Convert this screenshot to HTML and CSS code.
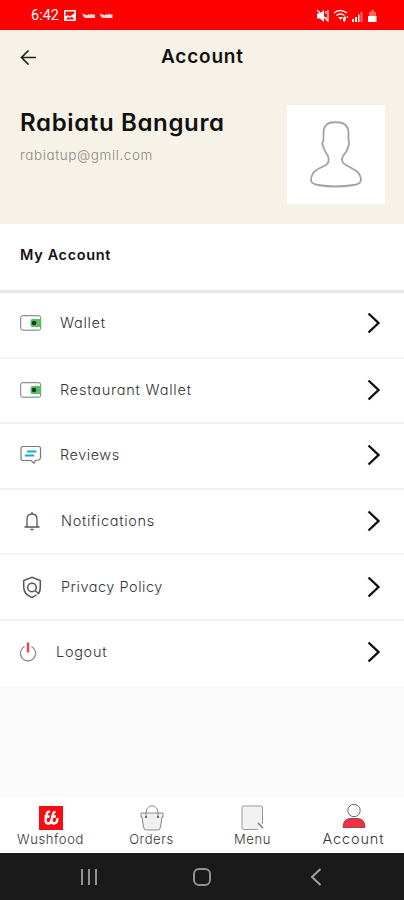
FILE: index.html
```html
<!DOCTYPE html>
<html lang="en">
<head>
<meta charset="utf-8">
<title>Account</title>
<link rel="stylesheet" href="styles.css">
</head>
<body>
<div class="phone">
  <div class="status">
    <span class="time">6:42</span>
    <svg class="status-left" width="52" height="14" viewBox="0 0 52 14" fill="#fff">
      <path fill-rule="evenodd" d="M1 1h10q1 0 1 1v9q0 1-1 1H1q-1 0-1-1V2q0-1 1-1zM1.500 2.500v5l2.500-1.500 2 1.500L10.500 4v-1.500zM2 10.500h8L8 7.500 6 9 4 8z"/>
      <path opacity=".85" d="M18 4l2 1.500h2l1 1 1.500-1.500 1.500 1 1-1.500 1 1h3v3.500h-9.500l-2-1zM35.500 4l2 1.500h2l1 1 1.500-1.500 1.500 1 1-1.500 1 1h3v3.500h-9.500l-2-1z"/>
    </svg>
    <svg class="status-right" width="62" height="14" viewBox="0 0 62 14" fill="#fff">
      <path d="M1 4.500h3l4-3.500v12l-4-3.500h-3z"/>
      <path d="M1 1l11 11M10 2v3M12 1v12M10 8v2" stroke="#fff" stroke-width="1.200"/>
      <path d="M18 4q6-5 13 0M20.500 6.500q4-3 8 0" fill="none" stroke="#fff" stroke-width="1.500"/>
      <path d="M22 8h5l-2.500 3zM27 9l2-2 1 2-1 4-2-1zM30 8l2-1v2zM36 10h2v3h-2zM39 8h2v5h-2zM42 5.500h1.500v7.500h-1.500z"/>
      <path opacity=".4" d="M44.500 3h2v10h-2zM53 3h2V1h3v2h2v4h-7z"/>
      <path d="M52 7h8.500v6h-8.500z"/>
    </svg>
  </div>
  <header class="header">
    <div class="bar">
      <svg width="18" height="18" viewBox="0 0 18 18" fill="none" stroke="#222" stroke-width="1.700"><path d="M16 8.500H2M8.500 1.500L1.500 8.500L8.500 15.500"/></svg>
      <h1 class="title">Account</h1>
    </div>
    <div class="profile">
      <div class="who">
        <h2 class="name">Rabiatu Bangura</h2>
        <p class="email">rabiatup@gmil.com</p>
      </div>
      <div class="avatar">
        <svg width="98" height="99" viewBox="0 0 98 99" fill="none" stroke="#a3a3a3" stroke-width="1.800"><path d="M44 17.500Q37 19 36.500 27V35Q34.500 38 36 41Q38 47 41 51Q43 57 39 60L31 64Q24 68 24 75Q24 79 31 80Q48 83 67 80Q74 79 74 74Q73 67 66 64L59 60Q53 57 56 51Q60 47 61.500 41Q63 38 61.500 35V27Q61 19 53 17.500Q48.500 17 44 17.500Z"/></svg>
      </div>
    </div>
  </header>
  <main class="list">
    <h3 class="section">My Account</h3>
    <div class="row first"><span class="ico"><svg width="22" height="18" viewBox="0 0 22 18"><rect x=".7" y="1.700" width="20" height="14.500" rx="2" fill="#fff" stroke="#777"/><path d="M12 5h9v8h-9q-1.500 0-1.500-4t1.500-4" fill="#58bd65"/><circle cx="14" cy="9" r="2.300" fill="#143b1b"/></svg></span><span class="label wallet">Wallet</span><svg class="chev" width="14" height="22" viewBox="0 0 14 22"><path d="M1.500 1.500L11.500 11L1.500 20.500"/></svg></div>
    <div class="row second"><span class="ico"><svg width="22" height="18" viewBox="0 0 22 18"><rect x=".7" y="1.700" width="20" height="14.500" rx="2" fill="#fff" stroke="#777"/><path d="M12 5h9v8h-9q-1.500 0-1.500-4t1.500-4" fill="#58bd65"/><circle cx="14" cy="9" r="2.300" fill="#143b1b"/></svg></span><span class="label restaurant">Restaurant Wallet</span><svg class="chev" width="14" height="22" viewBox="0 0 14 22"><path d="M1.500 1.500L11.500 11L1.500 20.500"/></svg></div>
    <div class="row"><span class="ico"><svg width="22" height="20" viewBox="0 0 22 20" fill="none"><path d="M3 1.500h15.500q2 0 2 2v9q0 2-2 2.500l-3 .500-1.500 2.500-3-2.500h-8q-2 0-2-2.500v-9q0-2.500 2-2.500z" stroke="#777" stroke-width="1.200"/><path d="M7 6.500h9.500M5 10.500h9" stroke="#1ca6dc" stroke-width="2"/></svg></span><span class="label reviews">Reviews</span><svg class="chev" width="14" height="22" viewBox="0 0 14 22"><path d="M1.500 1.500L11.500 11L1.500 20.500"/></svg></div>
    <div class="row"><span class="ico bell"><svg width="18" height="20" viewBox="0 0 18 20" fill="none" stroke="#555" stroke-width="1.300"><path d="M1.500 16h15M4 15.500V8.500Q4 3 9 3T14 8.500V15.500M9 3V1M7.500 18.500h3"/></svg></span><span class="label notifications">Notifications</span><svg class="chev" width="14" height="22" viewBox="0 0 14 22"><path d="M1.500 1.500L11.500 11L1.500 20.500"/></svg></div>
    <div class="row"><span class="ico shield"><svg width="20" height="23" viewBox="0 0 20 23" fill="none" stroke="#555" stroke-width="1.500"><path d="M16.500 17.500Q18.500 14.500 18.300 11V4.500L10 1.300L1.700 4.500V11Q1.700 18.500 10 21.500Q12.500 20.500 14.500 18.800"/><circle cx="10" cy="11.500" r="4.300"/><path d="M13 14.500L17 18"/></svg></span><span class="label privacy">Privacy Policy</span><svg class="chev" width="14" height="22" viewBox="0 0 14 22"><path d="M1.500 1.500L11.500 11L1.500 20.500"/></svg></div>
    <div class="row last"><span class="ico power"><svg width="18" height="20" viewBox="0 0 18 20" fill="none" stroke="#888" stroke-width="1.200"><path d="M4.500 4.500A7.600 7.600 0 1 0 11.500 4.500"/><path d="M8 .5v10" stroke="#ee4358" stroke-width="2.500"/></svg></span><span class="label logout">Logout</span><svg class="chev" width="14" height="22" viewBox="0 0 14 22"><path d="M1.500 1.500L11.500 11L1.500 20.500"/></svg></div>
  </main>
  <nav class="tabs">
    <div class="tab"><svg width="24" height="26" viewBox="0 0 24 26"><rect y="1" width="24" height="24" fill="#f80c12"/><path d="M11 7Q8 6 7.500 10L6.500 15Q6.500 18.500 9.500 18.500Q12 18.500 12.500 15L14 9Q14.500 7 16.500 7M12.500 15Q12.500 18.500 15 18.500Q18.500 18 18.500 13M5.500 11.500h5M13 11.500h4" fill="none" stroke="#fff" stroke-width="2.400"/></svg><span class="t-home">Wushfood</span></div>
    <div class="tab"><svg width="24" height="26" viewBox="0 0 24 26" fill="#f0f0f0" stroke="#888"><path d="M1 8h22v4h-1l-1.500 10q-.5 3-3 3h-11q-2.500 0-3-3L2 12H1z"/><path d="M6 12V8C6-1.500 18-1.500 18 8v4" fill="none"/><path d="M5 12h2M17 12h2" stroke="#444" stroke-width="1.500"/></svg><span class="t-orders">Orders</span></div>
    <div class="tab"><svg width="24" height="26" viewBox="0 0 24 26"><path d="M17 24.500H3q-2 0-2-2V3q0-2 2-2h17q1.500 0 1.500 2v16" fill="#f2f2f2" stroke="#999"/><path d="M17 18l5 5" stroke="#777" stroke-width="1.500"/></svg><span class="t-menu">Menu</span></div>
    <div class="tab active"><svg width="24" height="26" viewBox="0 0 24 26"><circle cx="12" cy="7.500" r="6.200" fill="#fff" stroke="#666"/><path d="M1 24.500Q1 16 8 15.500h8q7 .5 7 9z" fill="#ed3446" stroke="#8f3039" stroke-width=".8"/></svg><span class="t-account">Account</span></div>
  </nav>
  <div class="system">
    <svg width="18" height="18" viewBox="0 0 18 18" stroke="#929292" stroke-width="2"><path d="M2 1v16M9 1v16M16 1v16"/></svg>
    <svg width="20" height="20" viewBox="0 0 20 20" fill="none" stroke="#929292" stroke-width="2"><rect x="2" y="2" width="16" height="16" rx="5"/></svg>
    <svg width="12" height="18" viewBox="0 0 12 18" fill="none" stroke="#a2a2a2" stroke-width="2"><path d="M10.500 1L2 9l8.500 8"/></svg>
  </div>
</div>
</body>
</html>
```
FILE: styles.css
```css
* { box-sizing: border-box; }
body { margin: 0; font-family: Inter, "Open Sans", sans-serif; font-feature-settings: "cv11" 1; color: #111; }
h1, h2, h3, p { margin: 0; }
svg { display: block; flex: none; }
.phone { width: 404px; height: 900px; display: flex; flex-direction: column; background: #fafafa; overflow: hidden; }
.status { height: 30px; flex: none; background: #fe0000; display: flex; align-items: center; padding: 2px 32px 0 31px; color: #fff; }
.time { width: 33px; font: 14.5px/18px Roboto, sans-serif; }
.status-right { margin-left: auto; margin-right: -6px; }
.header { height: 194px; flex: none; background: #f7f2e7; }
.bar { height: 52px; display: grid; grid-template-columns: 141px auto; align-items: center; padding: 1px 0 0 20px; }
.bar svg { margin-top: 3px; }
.title { font-size: 19px; line-height: 24px; font-weight: 600; letter-spacing: .8px; }
.profile { display: flex; justify-content: space-between; padding: 23px 19px 0 20px; }
.name { font-size: 24px; line-height: 30px; font-weight: 600; letter-spacing: .65px; padding-top: 3px; white-space: nowrap; }
.email { font-size: 13.5px; line-height: 18px; font-weight: 300; letter-spacing: .6px; color: #888; margin-top: 8px; }
.avatar { width: 98px; height: 99px; background: #fff; }
.list { background: #fff; flex: none; height: 462px; }
.section { height: 66px; padding: 21px 20px 0; font-size: 14.5px; line-height: 20px; font-weight: 600; letter-spacing: .65px; }
.row { height: 65.7px; border-bottom: 2px solid #f2f2f2; display: flex; align-items: center; padding: 0 23px 1px 20px; }
.first { height: 69px; border-top: 3px solid #e8e8e8; padding-bottom: 4px; }
.second { height: 65px; padding-bottom: 2px; }
.last { border: 0; padding-bottom: 3px; }
.ico { width: 40px; }
.shield, .bell { width: 41px; }
.bell { padding-left: 3px; }
.shield { padding-left: 2px; padding-top: 2px; }
.power { width: 36px; }
.label { font-size: 14.5px; line-height: 20px; font-weight: 300; color: #333; white-space: nowrap; letter-spacing: .7px; }
.restaurant { letter-spacing: .78px; }
.reviews, .privacy { letter-spacing: .52px; }
.chev { margin-left: auto; fill: none; stroke: #111; stroke-width: 2.4; }
.tabs { height: 55px; flex: none; margin-top: auto; background: #fff; display: grid; grid-template-columns: repeat(4, 1fr); }
.tab { display: flex; flex-direction: column; align-items: center; padding-top: 7px; font-size: 13px; line-height: 16px; font-weight: 300; color: #333; letter-spacing: .6px; }
.active { padding-top: 5px; font-size: 14.5px; line-height: 17px; letter-spacing: .85px; }
.active span { margin-top: 1px; }
.system { height: 47px; flex: none; background: #1a1a1a; display: flex; align-items: center; justify-content: space-between; padding: 0 82px 0 80px; }
.system svg:nth-child(2) { margin-right: 5px; }
```
